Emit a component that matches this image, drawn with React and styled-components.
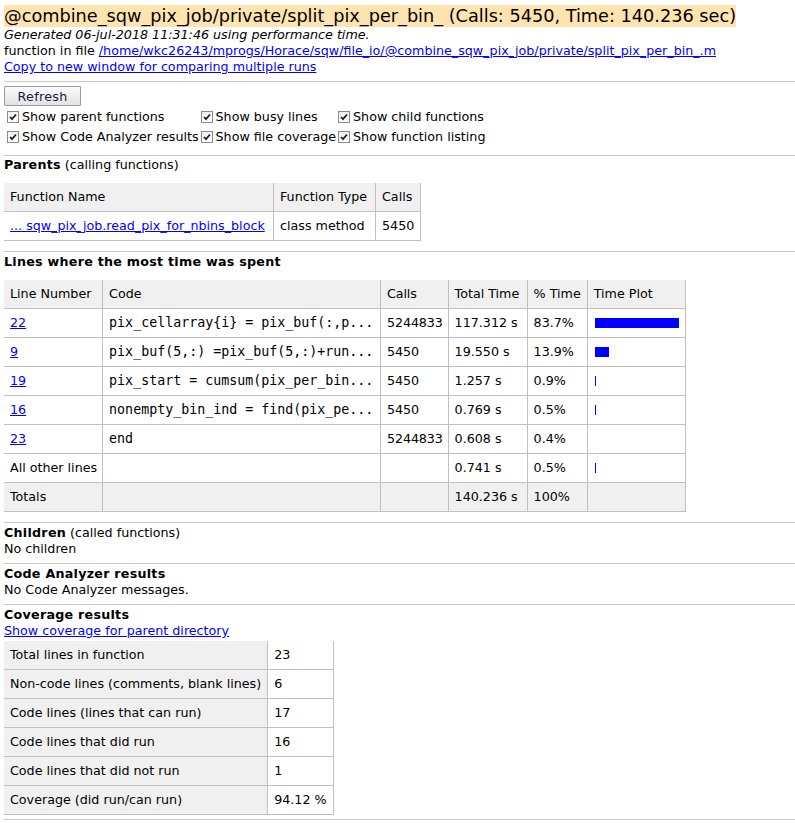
import styled, { createGlobalStyle } from "styled-components";

const GlobalStyle = createGlobalStyle`
  body {
    margin: 0;
    background: #fff;
    color: #000;
    font-family: "DejaVu Sans", "Liberation Sans", sans-serif;
    font-size: 12.7px;
    line-height: 16px;
  }
`;

const Page = styled.div`
  padding: 5px 0 0 4px;
`;

const Title = styled.h1`
  display: inline-block;
  margin: 0;
  font-size: 17.7px;
  font-weight: normal;
  line-height: 22px;
  white-space: nowrap;
  background: #ffe4b0;
`;

const Line = styled.div`
  font-style: ${(p) => (p.italic ? "italic" : "normal")};
  white-space: nowrap;
`;

const Link = styled.a`
  color: #0000ff;
  text-decoration: underline;
  cursor: pointer;
`;

const Rule = styled.div`
  border-top: 1px solid #c8c8c8;
  margin-top: ${(p) => p.top}px;
  margin-bottom: ${(p) => p.bottom}px;
`;

const Button = styled.button`
  display: block;
  width: 77px;
  height: 20px;
  margin-top: 4px;
  padding: 0;
  font-family: inherit;
  font-size: 12.7px;
  letter-spacing: 0.3px;
  color: #1a1a40;
  border: 1px solid #9a9a9a;
  border-radius: 1px;
  background: linear-gradient(#fbfbfb, #e2e2e2);
`;

const Options = styled.div`
  display: grid;
  grid-template-columns: auto auto auto;
  justify-content: start;
  column-gap: 2px;
  padding-left: 3px;
  margin-top: 1px;
`;

const Option = styled.label`
  display: flex;
  align-items: center;
  height: 20px;
  gap: 3px;
`;

const Box = styled.span`
  width: 10px;
  height: 10px;
  border: 1px solid #8a8a8a;
  background: linear-gradient(#f0f0f0, #ffffff);
  display: flex;
  align-items: center;
  justify-content: center;
`;

const Heading = styled.div`
  margin-bottom: ${(p) => p.gap || 0}px;
  white-space: nowrap;
`;

const Bold = styled.b`
  font-weight: bold;
  letter-spacing: 0.25px;
`;

const Table = styled.table`
  border-collapse: collapse;
  border-spacing: 0;
  margin-top: ${(p) => p.top || 0}px;
`;

const Cell = styled.td`
  padding: 6px ${(p) => (p.tight ? 5 : 6)}px 6px 6px;
  border-right: 1px solid #c0c0c0;
  border-bottom: 1px solid #c0c0c0;
  background: ${(p) => (p.shade ? "#f0f0f0" : "#fff")};
  font-family: ${(p) =>
    p.mono ? '"DejaVu Sans Mono", "Liberation Mono", monospace' : "inherit"};
  font-size: ${(p) => (p.mono ? "13.3px" : "12.7px")};
  letter-spacing: ${(p) => (p.narrow ? "-0.15px" : "normal")};
  line-height: 16px;
  white-space: nowrap;
  text-align: left;
  vertical-align: middle;
  height: 16px;
  width: ${(p) => (p.w ? `${p.w}px` : "auto")};
  box-sizing: content-box;
`;

const Bar = styled.div`
  height: 10px;
  margin-left: 1px;
  background: #0000ff;
`;

function Check({ label }) {
  return (
    <Option>
      <Box>
        <svg width="8" height="8" viewBox="0 0 8 8">
          <path d="M1 4 L3 6.2 L7 1.5" fill="none" stroke="#222" strokeWidth="1.8" />
        </svg>
      </Box>
      {label}
    </Option>
  );
}

const lines = [
  ["22", "pix_cellarray{i} = pix_buf(:,p...", "5244833", "117.312 s", "83.7%", 83.7],
  ["9", "pix_buf(5,:) =pix_buf(5,:)+run...", "5450", "19.550 s", "13.9%", 13.9],
  ["19", "pix_start = cumsum(pix_per_bin...", "5450", "1.257 s", "0.9%", 0.9],
  ["16", "nonempty_bin_ind = find(pix_pe...", "5450", "0.769 s", "0.5%", 0.5],
  ["23", "end", "5244833", "0.608 s", "0.4%", 0.4],
];

const coverage = [
  ["Total lines in function", "23"],
  ["Non-code lines (comments, blank lines)", "6"],
  ["Code lines (lines that can run)", "17"],
  ["Code lines that did run", "16"],
  ["Code lines that did not run", "1"],
  ["Coverage (did run/can run)", "94.12 %"],
];

function Plot({ pct }) {
  const w = Math.round(pct);
  return w > 0 ? <Bar style={{ width: w }} /> : null;
}

export default function App() {
  return (
    <Page>
      <GlobalStyle />
      <Title>
        @combine_sqw_pix_job/private/split_pix_per_bin_ (Calls: 5450, Time: 140.236 sec)
      </Title>
      <Line italic>Generated 06-jul-2018 11:31:46 using performance time.</Line>
      <Line>
        function in file{" "}
        <Link>
          /home/wkc26243/mprogs/Horace/sqw/file_io/@combine_sqw_pix_job/private/split_pix_per_bin_.m
        </Link>
      </Line>
      <Line>
        <Link>Copy to new window for comparing multiple runs</Link>
      </Line>
      <Rule top={6} bottom={0} />
      <Button>Refresh</Button>
      <Options>
        <Check label="Show parent functions" />
        <Check label="Show busy lines" />
        <Check label="Show child functions" />
        <Check label="Show Code Analyzer results" />
        <Check label="Show file coverage" />
        <Check label="Show function listing" />
      </Options>
      <Rule top={8} bottom={1} />
      <Heading gap={10}>
        <Bold>Parents</Bold> (calling functions)
      </Heading>
      <Table>
        <tbody>
          <tr>
            <Cell shade w={257}>Function Name</Cell>
            <Cell shade w={89}>Function Type</Cell>
            <Cell shade>Calls</Cell>
          </tr>
          <tr>
            <Cell>
              <Link>... sqw_pix_job.read_pix_for_nbins_block</Link>
            </Cell>
            <Cell>class method</Cell>
            <Cell>5450</Cell>
          </tr>
        </tbody>
      </Table>
      <Rule top={10} bottom={2} />
      <Heading gap={10}>
        <Bold>Lines where the most time was spent</Bold>
      </Heading>
      <Table>
        <tbody>
          <tr>
            <Cell shade tight w={84}>Line Number</Cell>
            <Cell shade w={265}>Code</Cell>
            <Cell shade tight narrow w={53}>Calls</Cell>
            <Cell shade w={66}>Total Time</Cell>
            <Cell shade w={47}>% Time</Cell>
            <Cell shade w={85}>Time Plot</Cell>
          </tr>
          {lines.map(([n, code, calls, total, pct, v]) => (
            <tr key={n}>
              <Cell tight>
                <Link>{n}</Link>
              </Cell>
              <Cell mono>{code}</Cell>
              <Cell tight narrow>{calls}</Cell>
              <Cell>{total}</Cell>
              <Cell>{pct}</Cell>
              <Cell>
                <Plot pct={v} />
              </Cell>
            </tr>
          ))}
          <tr>
            <Cell tight>All other lines</Cell>
            <Cell />
            <Cell tight narrow />
            <Cell>0.741 s</Cell>
            <Cell>0.5%</Cell>
            <Cell>
              <Plot pct={0.5} />
            </Cell>
          </tr>
          <tr>
            <Cell shade tight>Totals</Cell>
            <Cell shade />
            <Cell shade tight narrow />
            <Cell shade>140.236 s</Cell>
            <Cell shade>100%</Cell>
            <Cell shade />
          </tr>
        </tbody>
      </Table>
      <Rule top={10} bottom={2} />
      <Heading>
        <Bold>Children</Bold> (called functions)
      </Heading>
      <Line>No children</Line>
      <Rule top={6} bottom={2} />
      <Heading>
        <Bold>Code Analyzer results</Bold>
      </Heading>
      <Line>No Code Analyzer messages.</Line>
      <Rule top={6} bottom={2} />
      <Heading>
        <Bold>Coverage results</Bold>
      </Heading>
      <Line>
        <Link>Show coverage for parent directory</Link>
      </Line>
      <Table top={2}>
        <tbody>
          {coverage.map(([k, v]) => (
            <tr key={k}>
              <Cell shade>{k}</Cell>
              <Cell>{v}</Cell>
            </tr>
          ))}
        </tbody>
      </Table>
      <Rule top={4} bottom={4} />
    </Page>
  );
}
